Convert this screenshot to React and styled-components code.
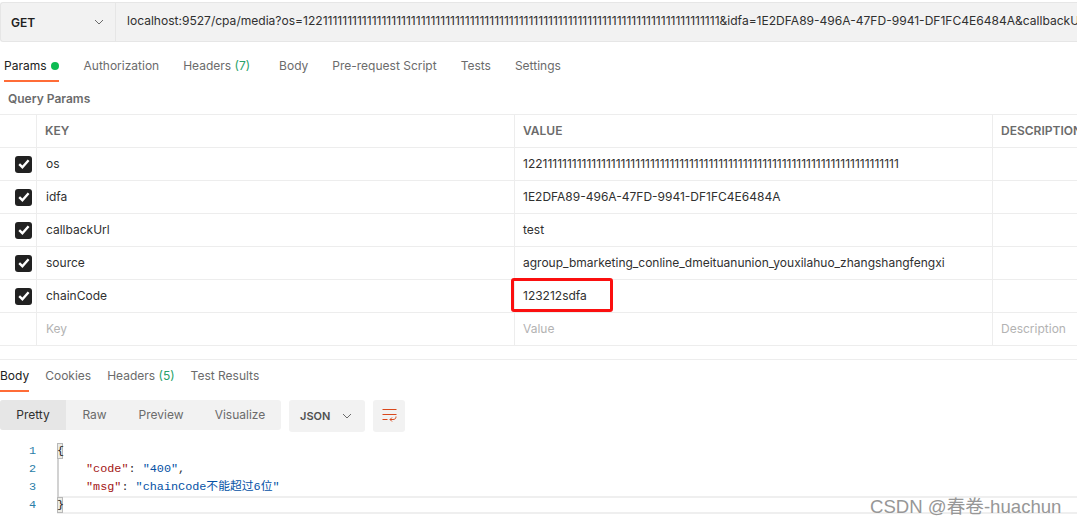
import React from 'react';
import styled, { createGlobalStyle } from 'styled-components';

const Global = createGlobalStyle`
  html, body { margin: 0; padding: 0; background: #fff; overflow: hidden; }
  body { font-family: Inter, "Noto Sans CJK SC", sans-serif; font-size: 12px; color: #505050; }
`;

const Page = styled.div`
  position: relative;
  width: 1077px;
  height: 525px;
  overflow: hidden;
  padding-top: 2px;
  box-sizing: border-box;
`;

const UrlBar = styled.div`
  display: flex;
  height: 40px;
  box-sizing: border-box;
  background: #f2f2f2;
  border: 1px solid #e6e6e6;
  border-right: none;
  border-radius: 3px 0 0 3px;
`;

const Method = styled.div`
  width: 115px;
  flex: none;
  display: flex;
  align-items: center;
  justify-content: space-between;
  padding: 0 11px 0 10px;
  box-sizing: border-box;
  border-right: 1px solid #e6e6e6;
  font-weight: 600;
  color: #212121;
`;

const UrlText = styled.div`
  padding: 0 0 0 11px;
  line-height: 36px;
  white-space: nowrap;
  overflow: hidden;
  color: #303030;
  font-size: 12.05px;
`;

const Tabs = styled.div`
  display: flex;
  align-items: flex-start;
  gap: ${p => p.$gap}px;
  height: ${p => p.$height}px;
  padding-left: ${p => p.$left}px;
  margin-top: ${p => p.$top}px;
  box-sizing: border-box;
  font-size: 12px;
`;

const Tab = styled.div`
  height: 100%;
  color: ${p => (p.$active ? '#212121' : '#6b6b6b')};
  white-space: nowrap;
  line-height: 15px;
  display: flex;
  gap: 4px;
  margin-right: ${p => p.$extra || 0}px;
  border-bottom: ${p => (p.$active ? '2px solid #ff6c37' : '2px solid transparent')};
  box-sizing: border-box;
`;

const Count = styled.span`
  color: #26a269;
`;

const Dot = styled.span`
  width: 8px;
  height: 8px;
  margin-top: 4px;
  border-radius: 50%;
  background: #0cbb52;
`;

const SectionTitle = styled.div`
  padding: 9px 0 0 8px;
  height: 32px;
  box-sizing: border-box;
  line-height: 15px;
  font-weight: 600;
  color: #6b6b6b;
`;

const Table = styled.div`
  display: grid;
  grid-template-columns: 37px 478px 478px 1fr;
  grid-auto-rows: 33px;
  border-top: 1px solid #ededed;
  width: 1077px;
`;

const Cell = styled.div`
  position: relative;
  display: flex;
  align-items: center;
  box-sizing: border-box;
  padding-left: ${p => (p.$check ? 15 : p.$tight ? 8 : 9)}px;
  padding-bottom: ${p => (p.$check ? 0 : 2)}px;
  border-right: ${p => (p.$last ? 'none' : '1px solid #ededed')};
  border-bottom: 1px solid #ededed;
  white-space: nowrap;
  overflow: ${p => (p.$over ? 'visible' : 'hidden')};
  color: ${p => (p.$head ? '#6b6b6b' : p.$ghost ? '#b3b3b3' : '#303030')};
  font-weight: ${p => (p.$head ? 600 : 400)};
`;

const Check = styled.span`
  width: 17px;
  height: 17px;
  border-radius: 3px;
  background: #212121;
  display: flex;
  align-items: center;
  justify-content: center;
`;

const RedBox = styled.div`
  position: absolute;
  left: -4px;
  top: -2px;
  width: 102px;
  height: 34px;
  box-sizing: border-box;
  border: 3px solid #fb0f0f;
  border-radius: 3px;
`;

const Divider = styled.div`
  height: 1px;
  background: #ededed;
  margin-top: 13px;
`;

const Toolbar = styled.div`
  display: flex;
  align-items: flex-start;
  margin-top: 8px;
  height: 32px;
`;

const Segments = styled.div`
  display: flex;
  width: 281px;
  height: 30px;
  background: #f2f2f2;
  border-radius: 3px;
  overflow: hidden;
`;

const Segment = styled.div`
  width: ${p => p.$w}px;
  flex: none;
  text-align: center;
  line-height: 29px;
  color: ${p => (p.$active ? '#303030' : '#6b6b6b')};
  background: ${p => (p.$active ? '#e6e6e6' : 'transparent')};
`;

const Format = styled.div`
  margin-left: 8px;
  width: 76px;
  height: 32px;
  box-sizing: border-box;
  padding: 0 13px 0 11px;
  background: #f2f2f2;
  border-radius: 3px;
  display: flex;
  align-items: center;
  justify-content: space-between;
  font-size: 11px;
  font-weight: 600;
  color: #505050;
`;

const WrapButton = styled.div`
  margin-left: 8px;
  width: 32px;
  height: 32px;
  background: #f2f2f2;
  border-radius: 3px;
  display: flex;
  align-items: center;
  justify-content: center;
`;

const Code = styled.div`
  position: relative;
  margin-top: 10px;
  font-family: "Liberation Mono", "Noto Sans CJK SC", monospace;
  font-size: 11.8px;
`;

const Guide = styled.div`
  position: absolute;
  left: 57px;
  top: 2px;
  bottom: 2px;
  width: 2px;
  background: #d2d2d2;
`;

const Line = styled.div`
  display: flex;
  height: 18px;
  line-height: 18px;
  box-sizing: border-box;
  box-shadow: ${p => (p.$active ? 'inset 0 2px 0 #efefef, inset 0 -2px 0 #efefef' : 'none')};
`;

const LineNo = styled.span`
  width: 36px;
  flex: none;
  text-align: right;
  color: #2b7ea8;
  background: #fff;
  align-self: stretch;
`;

const LineGap = styled.span`
  width: 21px;
  flex: none;
  background: #fff;
`;

const LineBody = styled.span`
  padding-left: ${p => (p.$indent ? 29 : 0)}px;
  white-space: pre;
  color: #303030;
`;

const Brace = styled.span`
  display: block;
  position: relative;
  width: 6px;
  height: 16px;
  line-height: 15px;
  margin-top: 1px;
  background: #ecece6;
  border: 1px solid #b8b8b8;
  box-sizing: border-box;
  color: #222;
  text-indent: -1px;
`;

const Key = styled.span`
  color: #a31515;
`;

const Str = styled.span`
  color: #0451a5;
`;

const Watermark = styled.div`
  position: absolute;
  left: 870px;
  top: 497px;
  font-family: "Liberation Sans", "Noto Sans CJK SC", sans-serif;
  font-size: 18.6px;
  line-height: 20px;
  color: #979797;
  white-space: nowrap;
`;

const Chevron = () => (
  <svg width="10" height="6" viewBox="0 0 10 6" fill="none" stroke="#6b6b6b" strokeWidth="1">
    <path d="M1 1l4 4 4-4" />
  </svg>
);

const Tick = () => (
  <svg width="12" height="10" viewBox="0 0 12 10" fill="none" stroke="#fff" strokeWidth="2.4">
    <path d="M1.2 5.2l3.2 3 6.2-7" />
  </svg>
);

const ones = n => '1'.repeat(n);

const rows = [
  ['os', '1221' + ones(72)],
  ['idfa', '1E2DFA89-496A-47FD-9941-DF1FC4E6484A'],
  ['callbackUrl', 'test'],
  ['source', 'agroup_bmarketing_conline_dmeituanunion_youxilahuo_zhangshangfengxi'],
  ['chainCode', '123212sdfa'],
];

const url = 'localhost:9527/cpa/media?os=1221' + ones(80) + '&idfa=1E2DFA89-496A-47FD-9941-DF1FC4E6484A&callbackUrl=test';

export default function App() {
  return (
    <Page>
      <Global />
      <UrlBar>
        <Method>GET <Chevron /></Method>
        <UrlText>{url}</UrlText>
      </UrlBar>

      <Tabs $gap={24} $height={24} $left={4} $top={16}>
        <Tab $active $extra={1}>Params <Dot /></Tab>
        <Tab>Authorization</Tab>
        <Tab $extra={5}><span>Headers <Count>(7)</Count></span></Tab>
        <Tab>Body</Tab>
        <Tab>Pre-request Script</Tab>
        <Tab>Tests</Tab>
        <Tab>Settings</Tab>
      </Tabs>

      <SectionTitle>Query Params</SectionTitle>

      <Table>
        <Cell />
        <Cell $head $tight>KEY</Cell>
        <Cell $head $tight>VALUE</Cell>
        <Cell $head $tight $last>DESCRIPTION</Cell>
        {rows.map(([key, value]) => (
          <React.Fragment key={key}>
            <Cell $check><Check><Tick /></Check></Cell>
            <Cell>{key}</Cell>
            <Cell $tight $over={key === 'chainCode'}>
              {value}
              {key === 'chainCode' && <RedBox />}
            </Cell>
            <Cell $last />
          </React.Fragment>
        ))}
        <Cell />
        <Cell $ghost>Key</Cell>
        <Cell $ghost $tight>Value</Cell>
        <Cell $ghost $tight $last>Description</Cell>
      </Table>

      <Divider />

      <Tabs $gap={16} $height={24} $left={0} $top={8}>
        <Tab $active>Body</Tab>
        <Tab>Cookies</Tab>
        <Tab><span>Headers <Count>(5)</Count></span></Tab>
        <Tab>Test Results</Tab>
      </Tabs>

      <Toolbar>
        <Segments>
          <Segment $active $w={66}>Pretty</Segment>
          <Segment $w={57}>Raw</Segment>
          <Segment $w={76}>Preview</Segment>
          <Segment $w={82}>Visualize</Segment>
        </Segments>
        <Format>JSON <Chevron /></Format>
        <WrapButton>
          <svg width="15" height="14" viewBox="0 0 15 14" fill="none" stroke="#d9481c" strokeWidth="1">
            <path d="M0.5 0.5h14M0.5 5.5h14M0.5 10.5h5M14 7.5c0 2-1 3-3 3H8M10 8.5l-2 2 2 2" />
          </svg>
        </WrapButton>
      </Toolbar>

      <Code>
        <Guide />
        <Line><LineNo>1</LineNo><LineGap /><LineBody><Brace>{'{'}</Brace></LineBody></Line>
        <Line><LineNo>2</LineNo><LineGap /><LineBody $indent><Key>"code"</Key>: <Str>"400"</Str>,</LineBody></Line>
        <Line><LineNo>3</LineNo><LineGap /><LineBody $indent><Key>"msg"</Key>: <Str>"chainCode不能超过6位"</Str></LineBody></Line>
        <Line $active><LineNo>4</LineNo><LineGap /><LineBody><Brace>{'}'}</Brace></LineBody></Line>
      </Code>

      <Watermark>CSDN @春卷-huachun</Watermark>
    </Page>
  );
}
